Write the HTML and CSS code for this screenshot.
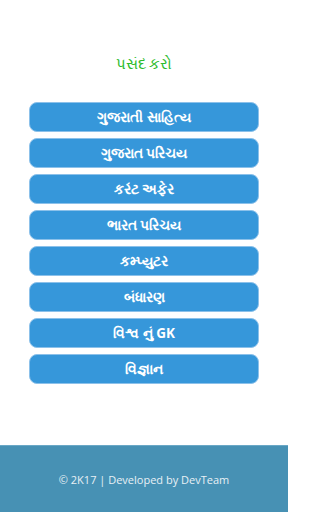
FILE: index.html
```html
<!DOCTYPE html>
<html lang="gu">
<head>
<meta charset="utf-8">
<link rel="stylesheet" href="styles.css">
</head>
<body>
<div class="page">
  <main class="content">
    <h1 class="title">પસંદ કરો</h1>
    <nav class="menu">
      <a class="btn">ગુજરાતી સાહિત્ય</a>
      <a class="btn">ગુજરાત પરિચય</a>
      <a class="btn">કરંટ અફેર</a>
      <a class="btn">ભારત પરિચય</a>
      <a class="btn">કમ્પ્યુટર</a>
      <a class="btn">બંધારણ</a>
      <a class="btn">વિશ્વ નું GK</a>
      <a class="btn">વિજ્ઞાન</a>
    </nav>
  </main>
  <footer class="footer">© 2K17 | Developed by DevTeam</footer>
</div>
</body>
</html>
```
FILE: styles.css
```css
* { box-sizing: border-box; }
html, body { margin: 0; padding: 0; }
body { font-family: "Noto Sans", "Open Sans", sans-serif; background: #fff; }
.page { width: 288px; height: 512px; display: flex; flex-direction: column; }
.content { flex: 1; display: flex; flex-direction: column; align-items: center; }
.title {
  margin: 52px 0 0;
  height: 22px;
  font-size: 15px;
  line-height: 22px;
  font-weight: normal;
  color: #2cbb2c;
}
.menu {
  margin-top: 28px;
  width: 230px;
  display: flex;
  flex-direction: column;
  gap: 6px;
}
.btn {
  height: 30px;
  border-radius: 8px;
  background: #3697da;
  border: 1px solid #8cc1ea;
  color: #fff;
  font-size: 13.5px;
  font-weight: bold;
  display: flex;
  align-items: center;
  justify-content: center;
}
.footer {
  height: 67px;
  background: #4791b4;
  border-top: 1px solid #6aa8c6;
  color: #e8f0f4;
  font-family: "Open Sans", sans-serif;
  font-size: 11px;
  display: flex;
  align-items: center;
  justify-content: center;
}
```
